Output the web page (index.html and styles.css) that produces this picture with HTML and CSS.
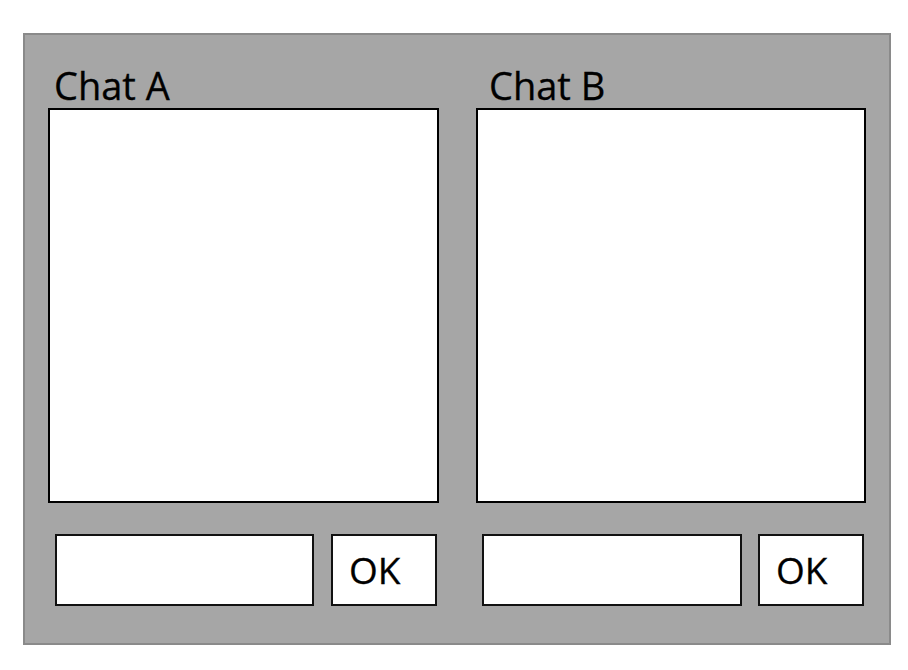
FILE: index.html
```html
<!DOCTYPE html>
<html>
<head>
<meta charset="utf-8">
<link rel="stylesheet" href="styles.css">
</head>
<body>
<div class="frame">
  <div class="chat chat-a">
    <div class="label">Chat A</div>
    <div class="log"></div>
    <div class="compose">
      <div class="field"></div>
      <div class="ok">OK</div>
    </div>
  </div>
  <div class="chat chat-b">
    <div class="label">Chat B</div>
    <div class="log"></div>
    <div class="compose">
      <div class="field"></div>
      <div class="ok">OK</div>
    </div>
  </div>
</div>
</body>
</html>
```
FILE: styles.css
```css
html, body {
  margin: 0;
  padding: 0;
  background: #ffffff;
}
body {
  font-family: "Open Sans", "Noto Sans", sans-serif;
  color: #000;
}
.frame {
  box-sizing: border-box;
  margin: 33px 0 0 23px;
  width: 868px;
  height: 612px;
  background: #a6a6a6;
  border: 2px solid #8a8a8a;
  padding: 28px 23px 0 23px;
  display: grid;
  grid-template-columns: 391px 390px;
  column-gap: 37px;
}
.chat {
  display: flex;
  flex-direction: column;
}
.label {
  font-size: 38px;
  line-height: 44px;
  height: 44px;
  margin-bottom: 1px;
  -webkit-text-stroke: 0.3px #000;
}
.chat-a .label { padding-left: 6px; }
.chat-b .label { padding-left: 13px; }
.log {
  box-sizing: border-box;
  height: 395px;
  background: #fff;
  border: 2px solid #000;
}
.compose {
  display: flex;
  margin-top: 31px;
  height: 72px;
}
.chat-a .compose { padding-left: 7px; gap: 17px; }
.chat-b .compose { padding-left: 6px; gap: 16px; }
.field {
  box-sizing: border-box;
  width: 259px;
  height: 72px;
  background: #fff;
  border: 2px solid #111;
}
.chat-b .field { width: 260px; }
.ok {
  box-sizing: border-box;
  width: 106px;
  height: 72px;
  background: #fff;
  border: 2px solid #111;
  font-size: 37px;
  line-height: 68px;
  padding-left: 16px;
  -webkit-text-stroke: 0.3px #000;
}
```
